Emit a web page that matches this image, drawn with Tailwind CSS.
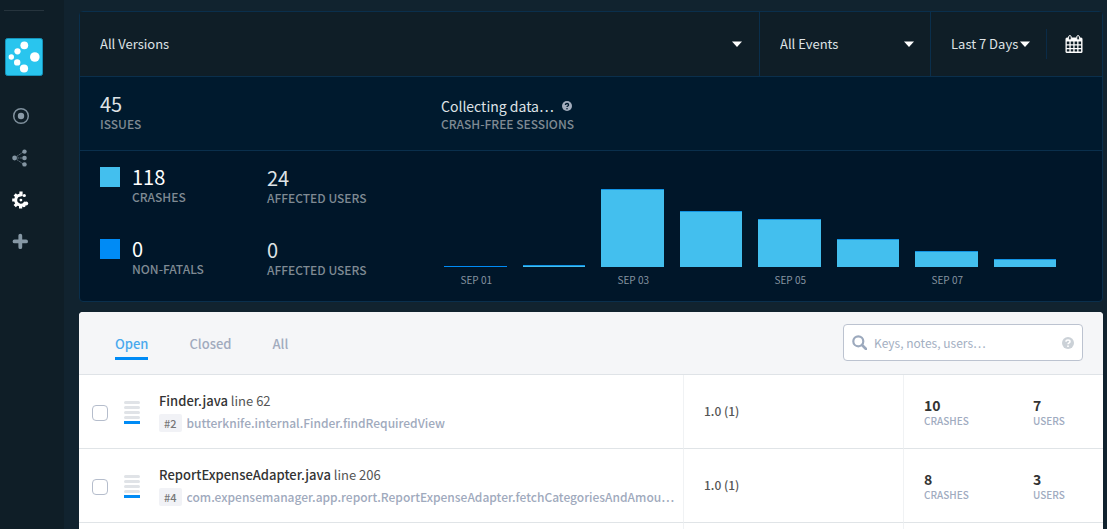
<!DOCTYPE html>
<html lang="en">
<head>
<meta charset="utf-8">
<meta name="viewport" content="width=device-width, initial-scale=1">
<title>Issues</title>
<script src="https://cdn.jsdelivr.net/npm/@tailwindcss/browser@4"></script>
</head>
<body class="flex min-h-screen bg-[#11232f] font-['Noto_Sans_CJK_SC','Noto_Sans',sans-serif] text-[13px] leading-5 text-[#dfe3e6]">

<!-- Sidebar -->
<nav aria-label="Main" class="flex w-16 shrink-0 flex-col bg-[#0f1e27] pt-2.5 pl-1">
  <div class="w-10 border-t border-[#26343d]"></div>
  <a href="#" aria-label="Home" class="mt-[27px] ml-px block size-[38px]">
    <svg viewBox="0 0 38 38" class="size-full"><rect x=".5" y=".5" width="37" height="37" rx="2" fill="#29c5ee" stroke="#1593ba"/><g fill="#fff"><circle cx="19.300" cy="7.300" r="3.900"/><circle cx="12.500" cy="13.300" r="3.100"/><circle cx="6.300" cy="19" r="2.700"/><circle cx="12.200" cy="24.400" r="3.200"/><circle cx="19" cy="30.500" r="4.100"/><circle cx="29.800" cy="19" r="4.800"/></g></svg>
  </a>
  <div class="mt-[31px] ml-2 flex flex-col gap-6">
    <a href="#" aria-label="Live"><svg viewBox="0 0 18 18" class="size-[18px]"><circle cx="9" cy="9" r="7.300" fill="none" stroke="#7f909d" stroke-width="1.500"/><circle cx="9" cy="9" r="3.200" fill="#8a9ba8"/></svg></a>
    <a href="#" aria-label="Funnels"><svg viewBox="0 0 18 18" class="size-[18px]"><path d="M2.500 9H12M2.500 9 12 2.500M2.500 9 12 15.500" fill="none" stroke="#61717d" stroke-width="1" stroke-dasharray="2 .8"/><g fill="#8496a3"><circle cx="2.600" cy="9" r="2.400"/><circle cx="12.500" cy="2.600" r="2.200"/><circle cx="12.500" cy="9" r="2.300"/><circle cx="12.500" cy="15.400" r="2.200"/></g></svg></a>
    <a href="#" aria-label="Crashes"><svg viewBox="0 0 18 18" class="size-[18px]"><path d="M8.700 3.900A5.100 5.100 0 1 0 13.500 11" fill="none" stroke="#fff" stroke-width="3"/><path d="M9 .6v4.600M8.600 13v4.400M.2 9h3M2.700 3.300l2.500 2.500M2.700 15.200l2.500-2.500" stroke="#fff" stroke-width="3.200"/><circle cx="8.900" cy="9.100" r="1.400" fill="#fff"/><circle cx="12.300" cy="4.500" r="1.600" fill="#fff"/><circle cx="14.200" cy="12.600" r="2" fill="#fff"/><circle cx="11.900" cy="14.600" r="1.700" fill="#fff"/></svg></a>
    <a href="#" aria-label="Add"><svg viewBox="0 0 18 18" class="size-[18px]"><path d="M8.300 2.600v11.600M2.500 8.400h11.600" stroke="#8698a5" stroke-width="3.800" stroke-linecap="round"/></svg></a>
  </div>
</nav>

<main class="flex min-w-0 grow flex-col gap-2.5 pt-[11px] pr-1 pl-[15px]">

  <section class="rounded-sm border border-[#0a2f4c] bg-[#001629]">
    <!-- Filters -->
    <div class="flex h-16 bg-[#0f1e27]">
      <label class="grid grow items-center">
        <select aria-label="Versions" class="col-start-1 row-start-1 h-full w-full appearance-none bg-transparent pl-5"><option>All Versions</option></select>
        <svg viewBox="0 0 10 6" class="pointer-events-none col-start-1 row-start-1 mr-[17px] h-1.5 w-2.5 justify-self-end"><path d="M0 .5h10L5 6z" fill="#fff"/></svg>
      </label>
      <label class="grid w-[171px] items-center border-l border-[#0a2f4c]">
        <select aria-label="Events" class="col-start-1 row-start-1 h-full w-full appearance-none bg-transparent pl-5"><option>All Events</option></select>
        <svg viewBox="0 0 10 6" class="pointer-events-none col-start-1 row-start-1 mr-4 h-1.5 w-2.5 justify-self-end"><path d="M0 .5h10L5 6z" fill="#fff"/></svg>
      </label>
      <div class="flex w-[172px] items-center border-l border-[#0a2f4c]">
        <label class="grid w-[99px] items-center">
          <select aria-label="Time range" class="col-start-1 row-start-1 w-full appearance-none bg-transparent pl-5"><option>Last 7 Days</option></select>
          <svg viewBox="0 0 10 6" class="pointer-events-none col-start-1 row-start-1 h-1.5 w-2.5 justify-self-end"><path d="M0 .5h10L5 6z" fill="#fff"/></svg>
        </label>
        <div class="ml-4 h-[30px] border-l border-[#0a2b47]"></div>
        <button type="button" aria-label="Pick dates" class="ml-[18px]"><svg viewBox="0 0 18 19" class="h-[19px] w-[18px]"><rect x=".5" y="2.500" width="17" height="15.500" rx="1.500" fill="#fff"/><g fill="#0f1e27"><path d="M1.800 6.600h2.600v2.600H1.800zM5.700 6.600h2.600v2.600H5.700zM9.600 6.600h2.600v2.600H9.600zM13.500 6.600h2.600v2.600h-2.600zM1.800 10.500h2.600v2.600H1.800zM5.700 10.500h2.600v2.600H5.700zM9.600 10.500h2.600v2.600H9.600zM13.500 10.500h2.600v2.600h-2.600zM1.800 14.300h2.600v2.200H1.800zM5.700 14.300h2.600v2.200H5.700zM9.600 14.300h2.600v2.200H9.600zM13.500 14.300h2.600v2.200h-2.600z"/></g><rect x="3.600" y=".6" width="2.600" height="4.500" rx="1.300" fill="#0f1e27" stroke="#fff"/><rect x="11.800" y=".6" width="2.600" height="4.500" rx="1.300" fill="#0f1e27" stroke="#fff"/></svg></button>
      </div>
    </div>

    <!-- Summary -->
    <div class="grid h-[75px] grid-cols-[341px_1fr] border-y border-[#0a2f4c] bg-[#001a2e] pt-[15px] pl-5">
      <div>
        <p class="text-xl leading-6">45</p>
        <p class="text-xs leading-4 font-medium text-[#7f8a93]">ISSUES</p>
      </div>
      <div>
        <p class="flex items-center gap-2 pt-1 text-sm leading-5">Collecting data…
          <svg viewBox="0 0 10 10" class="size-2.5"><circle cx="5" cy="5" r="5" fill="#a3adbd"/><path d="M3.400 3.900C3.400 2 6.600 2 6.600 3.900 6.600 4.900 5 5 5 6.100" fill="none" stroke="#001a2e" stroke-width="1.300"/><circle cx="5" cy="7.700" r=".8" fill="#001a2e"/></svg></p>
        <p class="text-xs leading-4 font-medium text-[#7f8a93]">CRASH-FREE SESSIONS</p>
      </div>
    </div>

    <!-- Totals and daily chart -->
    <div class="grid h-[150px] grid-cols-[344px_1fr] pl-5">
      <div class="grid grid-cols-[32px_135px_1fr] grid-rows-[72px_72px] pt-4">
        <i class="size-5 bg-[#43bfee]"></i>
        <div><p class="text-xl leading-5 text-white">118</p><p class="text-xs leading-5 font-medium text-[#7f8a93]">CRASHES</p></div>
        <div class="pt-px"><p class="text-xl leading-5">24</p><p class="text-xs leading-5 font-medium text-[#7f8a93]">AFFECTED USERS</p></div>
        <i class="size-5 bg-[#008bf5]"></i>
        <div><p class="text-xl leading-5 text-white">0</p><p class="text-xs leading-5 font-medium text-[#7f8a93]">NON-FATALS</p></div>
        <div class="pt-px"><p class="text-xl leading-5">0</p><p class="text-xs leading-5 font-medium text-[#7f8a93]">AFFECTED USERS</p></div>
      </div>
      <div class="mr-[46px] grid grid-cols-8 grid-rows-[116px_26px] items-end gap-x-4 text-center text-[10px] leading-4 text-[#8593a0]">
        <div class="bg-[#008bf5]" style="height:1px"></div>
        <div class="border-t border-[#1193e4] bg-[#43bfee]" style="height:2px"></div>
        <div class="border-t border-[#1193e4] bg-[#43bfee]" style="height:78px"></div>
        <div class="border-t border-[#1193e4] bg-[#43bfee]" style="height:56px"></div>
        <div class="border-t border-[#1193e4] bg-[#43bfee]" style="height:48px"></div>
        <div class="border-t border-[#1193e4] bg-[#43bfee]" style="height:28px"></div>
        <div class="border-t border-[#1193e4] bg-[#43bfee]" style="height:16px"></div>
        <div class="border-t border-[#1193e4] bg-[#43bfee]" style="height:8px"></div>
        <span class="col-start-1 self-start pt-[5px] pl-0.5">SEP 01</span>
        <span class="col-start-3 self-start pt-[5px] pl-0.5">SEP 03</span>
        <span class="col-start-5 self-start pt-[5px] pl-0.5">SEP 05</span>
        <span class="col-start-7 self-start pt-[5px] pl-0.5">SEP 07</span>
      </div>
    </div>
  </section>

  <!-- Issue list -->
  <section class="grow rounded-t-sm bg-white">
    <div class="flex h-[63px] items-center justify-between rounded-t-sm border-b border-[#dfe3e7] bg-[#f5f6f8] pr-5 pb-px pl-9">
      <div class="flex gap-[41px] font-medium text-[#a1abbe]">
        <button type="button" class="border-b-3 border-[#008bf5] pt-2 pb-[3px] text-[#4aa9ee]">Open</button>
        <button type="button" class="border-b-3 border-transparent pt-2 pb-[3px]">Closed</button>
        <button type="button" class="border-b-3 border-transparent pt-2 pb-[3px]">All</button>
      </div>
      <label class="flex h-[37px] w-60 items-center gap-[7px] rounded border border-[#bcc3d0] bg-white px-2">
        <svg viewBox="0 0 15 15" class="size-[15px] shrink-0"><circle cx="6.300" cy="6.300" r="5" fill="none" stroke="#9ca9bd" stroke-width="2.200"/><path d="m10 10 4 4" stroke="#9ca9bd" stroke-width="2.600" stroke-linecap="round"/></svg>
        <input type="text" aria-label="Search issues" placeholder="Keys, notes, users…" class="min-w-0 grow bg-transparent text-xs leading-5 outline-none placeholder:text-[#a3afc2]">
        <svg viewBox="0 0 12 12" class="size-3 shrink-0"><circle cx="6" cy="6" r="6" fill="#cbd1d7"/><path d="M4 4.700C4 2.500 8 2.500 8 4.700 8 5.900 6 5.900 6 7.300" fill="none" stroke="#fff" stroke-width="1.500"/><circle cx="6" cy="9.200" r=".9" fill="#fff"/></svg>
      </label>
    </div>

    <table class="w-full table-fixed border-separate border-spacing-0 text-[#555]">
      <colgroup><col class="w-[45px]"><col class="w-[35px]"><col><col class="w-[220px]"><col class="w-[110px]"><col class="w-[90px]"></colgroup>
      <tbody>
        <tr class="h-[74px] *:border-b *:border-b-[#e0e4e7]">
          <td class="pt-0.5 pl-[13px]"><input type="checkbox" aria-label="Select Finder.java" class="block size-4 appearance-none rounded border border-[#b5bdcc] bg-white"></td>
          <td class="pt-0.5"><div class="flex w-4 flex-col gap-0.5"><i class="h-[3px] rounded-xs bg-[#e0e3e7]"></i><i class="h-[3px] rounded-xs bg-[#e0e3e7]"></i><i class="h-[3px] rounded-xs bg-[#e0e3e7]"></i><i class="h-[3px] rounded-xs bg-[#e0e3e7]"></i><i class="h-[3px] bg-[#008bf5]"></i></div></td>
          <td class="pt-px pr-2">
            <p class="truncate"><a href="#" class="font-medium text-[#333]">Finder.java</a> line 62</p>
            <p class="mt-0.5 flex items-center gap-[5px] text-xs leading-5 font-medium text-[#9faabd]"><span class="rounded-xs bg-[#f1f2f6] px-[5px] text-[11px] leading-[18px] text-[#777]">#2</span><span class="truncate">butterknife.internal.Finder.findRequiredView</span></p>
          </td>
          <td class="border-l border-l-[#f0f2f4] pb-0.5 pl-5 text-xs font-medium">1.0 (1)</td>
          <td class="border-l border-l-[#f0f2f4] pl-5"><p class="text-sm leading-[18px] font-bold text-[#333]">10</p><p class="text-[10px] leading-[14px] font-medium text-[#a0abbf]">CRASHES</p></td>
          <td class="pl-5"><p class="text-sm leading-[18px] font-bold text-[#333]">7</p><p class="text-[10px] leading-[14px] font-medium text-[#a0abbf]">USERS</p></td>
        </tr>
        <tr class="h-[74px] *:border-b *:border-b-[#e0e4e7]">
          <td class="pt-0.5 pl-[13px]"><input type="checkbox" aria-label="Select ReportExpenseAdapter.java" class="block size-4 appearance-none rounded border border-[#b5bdcc] bg-white"></td>
          <td class="pt-0.5"><div class="flex w-4 flex-col gap-0.5"><i class="h-[3px] rounded-xs bg-[#e0e3e7]"></i><i class="h-[3px] rounded-xs bg-[#e0e3e7]"></i><i class="h-[3px] rounded-xs bg-[#e0e3e7]"></i><i class="h-[3px] rounded-xs bg-[#e0e3e7]"></i><i class="h-[3px] bg-[#008bf5]"></i></div></td>
          <td class="pt-px pr-2">
            <p class="truncate"><a href="#" class="font-medium text-[#333]">ReportExpenseAdapter.java</a> line 206</p>
            <p class="mt-0.5 flex items-center gap-[5px] text-xs leading-5 font-medium text-[#9faabd]"><span class="rounded-xs bg-[#f1f2f6] px-[5px] text-[11px] leading-[18px] text-[#777]">#4</span><span class="truncate">com.expensemanager.app.report.ReportExpenseAdapter.fetchCategoriesAndAmou…</span></p>
          </td>
          <td class="border-l border-l-[#f0f2f4] pb-0.5 pl-5 text-xs font-medium">1.0 (1)</td>
          <td class="border-l border-l-[#f0f2f4] pl-5"><p class="text-sm leading-[18px] font-bold text-[#333]">8</p><p class="text-[10px] leading-[14px] font-medium text-[#a0abbf]">CRASHES</p></td>
          <td class="pl-5"><p class="text-sm leading-[18px] font-bold text-[#333]">3</p><p class="text-[10px] leading-[14px] font-medium text-[#a0abbf]">USERS</p></td>
        </tr>
        <tr class="h-1.5"><td></td><td></td><td></td><td class="border-l border-l-[#f0f2f4]"></td><td class="border-l border-l-[#f0f2f4]"></td><td></td></tr>
      </tbody>
    </table>
  </section>
</main>
</body>
</html>
